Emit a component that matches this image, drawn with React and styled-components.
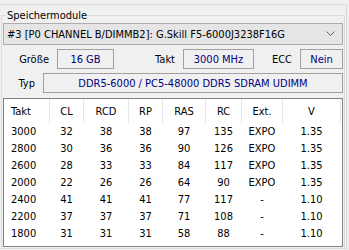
import React from 'react';
import styled, { createGlobalStyle } from 'styled-components';

const GlobalStyle = createGlobalStyle`
    html, body {
        margin: 0;
        padding: 0;
        background: #f0f0f0;
    }
    body {
        font-family: "DejaVu Sans Condensed", "DejaVu Sans", sans-serif;
        font-size: 11px;
        color: #000;
        width: 349px;
        height: 250px;
        overflow: hidden;
    }
`;

const columns = [
    { label: 'Takt', width: 46, left: true },
    { label: 'CL', width: 34 },
    { label: 'RCD', width: 45 },
    { label: 'RP', width: 34 },
    { label: 'RAS', width: 43 },
    { label: 'RC', width: 36 },
    { label: 'Ext.', width: 41 },
    { label: 'V', width: 58 },
];

const timings = [
    ['3000', '32', '38', '38', '97', '135', 'EXPO', '1.35'],
    ['2800', '30', '36', '36', '90', '126', 'EXPO', '1.35'],
    ['2600', '28', '33', '33', '84', '117', 'EXPO', '1.35'],
    ['2000', '22', '26', '26', '64', '90', 'EXPO', '1.35'],
    ['2400', '41', '41', '41', '77', '117', '-', '1.10'],
    ['2200', '37', '37', '37', '71', '108', '-', '1.10'],
    ['1800', '31', '31', '31', '58', '88', '-', '1.10'],
];

const TabPage = styled.div`
    margin-top: 4px;
    width: 346px;
    height: 243px;
    border-top: 1px solid #dadada;
    border-right: 1px solid #dadada;
    border-bottom: 1px solid #dadada;
`;

const GroupBox = styled.fieldset`
    margin: 4px 1px 0 1px;
    padding: 0 1px 1px 1px;
    border: 1px solid #dcdcdc;
    min-width: 0;
    display: flex;
    flex-direction: column;

    legend {
        margin-left: 3px;
        padding: 0 1px;
        line-height: 13px;
    }
`;

const Combo = styled.div`
    margin-top: 1px;
    height: 20px;
    border: 1px solid #adadad;
    background: #e5e5e5;
    display: flex;
    align-items: center;
    padding: 0 7px 0 3px;
    white-space: nowrap;

    span {
        flex: 1;
    }
`;

const FieldRow = styled.div`
    display: flex;
    height: 20px;
    margin-top: 4px;
`;

const Label = styled.div`
    width: ${(p) => p.$w}px;
    flex: none;
    display: flex;
    align-items: center;
    justify-content: flex-end;
    padding-right: 8px;
    box-sizing: border-box;
`;

const Value = styled.div`
    width: ${(p) => (p.$w ? `${p.$w}px` : 'auto')};
    flex: ${(p) => (p.$w ? 'none' : '1')};
    box-sizing: border-box;
    border: 1px solid #a0a0a0;
    background: #f0f0f0;
    color: #000080;
    display: flex;
    align-items: center;
    justify-content: center;
    white-space: nowrap;
`;

const ListView = styled.div`
    margin-top: 5px;
    height: 149px;
    box-sizing: border-box;
    border: 1px solid #828282;
    background: #fff;
`;

const HeaderRow = styled.div`
    display: flex;
    height: 24px;
`;

const HeaderCell = styled.div`
    width: ${(p) => p.$w}px;
    flex: none;
    box-sizing: border-box;
    border-right: 1px solid #e5e5e5;
    display: flex;
    align-items: center;
    justify-content: ${(p) => (p.$left ? 'flex-start' : 'center')};
    padding-left: ${(p) => (p.$left ? '7px' : '0')};
`;

const DataRow = styled.div`
    display: flex;
    height: 17px;
`;

const Cell = styled.div`
    width: ${(p) => p.$w}px;
    flex: none;
    box-sizing: border-box;
    padding-right: 1px;
    display: flex;
    align-items: center;
    justify-content: ${(p) => (p.$left ? 'flex-start' : 'center')};
    padding-left: ${(p) => (p.$left ? '7px' : '0')};
`;

const Chevron = () => (
    <svg width="9" height="6" viewBox="0 0 9 6">
        <path d="M0.5 0.5 L4.5 4.5 L8.5 0.5" fill="none" stroke="#606060" strokeWidth="1" />
    </svg>
);

export default function App() {
    return (
        <>
            <GlobalStyle />
            <TabPage>
                <GroupBox>
                    <legend>Speichermodule</legend>
                    <Combo>
                        <span>#3 [P0 CHANNEL B/DIMMB2]: G.Skill F5-6000J3238F16G</span>
                        <Chevron />
                    </Combo>

                    <FieldRow>
                        <Label $w={54}>Größe</Label>
                        <Value $w={57}>16 GB</Value>
                        <Label $w={69}>Takt</Label>
                        <Value $w={71}>3000 MHz</Value>
                        <Label $w={46}>ECC</Label>
                        <Value $w={43}>Nein</Value>
                    </FieldRow>

                    <FieldRow>
                        <Label $w={40}>Typ</Label>
                        <Value>DDR5-6000 / PC5-48000 DDR5 SDRAM UDIMM</Value>
                    </FieldRow>

                    <ListView>
                        <HeaderRow>
                            {columns.map((c) => (
                                <HeaderCell key={c.label} $w={c.width} $left={c.left}>{c.label}</HeaderCell>
                            ))}
                        </HeaderRow>
                        {timings.map((row, i) => (
                            <DataRow key={i}>
                                {row.map((v, j) => (
                                    <Cell key={j} $w={columns[j].width} $left={columns[j].left}>{v}</Cell>
                                ))}
                            </DataRow>
                        ))}
                    </ListView>
                </GroupBox>
            </TabPage>
        </>
    );
}
